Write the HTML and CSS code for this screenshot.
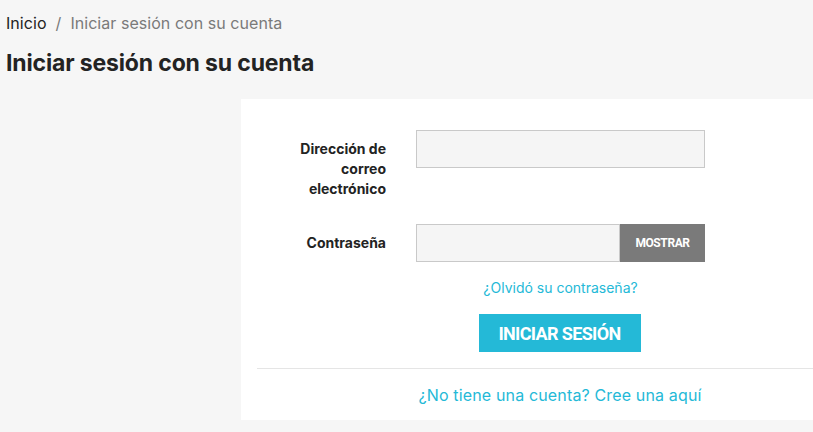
FILE: index.html
```html
<!DOCTYPE html>
<html lang="es">
<head>
<meta charset="utf-8">
<title>Iniciar sesión</title>
<link rel="stylesheet" href="styles.css">
</head>
<body>
<div class="wrap">
  <nav class="crumbs"><a class="crumb-home" href="#">Inicio</a><span class="sep">/</span><span class="crumb-cur">Iniciar sesión con su cuenta</span></nav>
  <h1 class="title">Iniciar sesión con su cuenta</h1>
  <section class="card">
    <form class="form">
      <div class="row row-email">
        <label class="lbl">Dirección de correo electrónico</label>
        <div class="field"><input class="inp" type="email"></div>
      </div>
      <div class="row row-pass">
        <label class="lbl">Contraseña</label>
        <div class="field group"><input class="inp inp-pass" type="password"><button type="button" class="show">MOSTRAR</button></div>
      </div>
      <div class="forgot"><a href="#">¿Olvidó su contraseña?</a></div>
      <div class="submit-row"><button type="button" class="submit">INICIAR SESIÓN</button></div>
    </form>
    <hr class="sepline">
    <div class="noacc"><a href="#">¿No tiene una cuenta? Cree una aquí</a></div>
  </section>
</div>
</body>
</html>
```
FILE: styles.css
```css
html, body { margin: 0; padding: 0; background: #f6f6f6; overflow: hidden; }
body { font-family: Inter, "Noto Sans", sans-serif; color: #232323; width: 813px; height: 432px; }
a { text-decoration: none; color: #24b9d7; }
.wrap { padding: 11px 0 0 6px; }
.crumbs { font-size: 16px; line-height: 24px; height: 24px; white-space: nowrap; letter-spacing: 0.05px; }
.crumb-home { color: #232323; }
.sep { color: #7a7a7a; margin: 0 9px 0 9px; }
.crumb-cur { color: #7a7a7a; }
.title { margin: 13px 0 0 0; font-size: 23px; line-height: 30px; font-weight: 700; letter-spacing: -0.15px; }
.card { margin: 21px 0 0 235px; width: 606px; padding: 0 16px; background: #fff; height: 321px; box-sizing: content-box; }
.form { padding-top: 31px; }
.row { display: flex; gap: 30px; }
.lbl { box-sizing: border-box; width: 129px; padding-left: 19px; text-align: right; font-size: 14px; font-weight: 700; line-height: 20px; padding-top: 9px; color: #232323; }
.field { width: 289px; }
.row-pass { margin-top: 25px; }
.inp { box-sizing: border-box; width: 289px; height: 38px; background: #f5f5f5; border: 1px solid #c9c9c9; margin: 0; padding: 0 10px; display: block; font-size: 14px; }
.group { display: flex; }
.inp-pass { width: 204px; }
.show { width: 85px; height: 38px; border: 0; background: #7a7a7a; color: #fff; font-family: Roboto, sans-serif; font-weight: 700; font-size: 12px; letter-spacing: -0.4px; padding: 0; margin: 0; }
.forgot { margin: 16px 0 0 159px; width: 289px; text-align: center; font-size: 14px; line-height: 20px; letter-spacing: 0px; }
.submit-row { margin: 16px 0 0 159px; width: 289px; display: flex; justify-content: center; }
.submit { width: 162px; height: 38px; border: 0; background: #24b9d7; color: #fff; font-family: Roboto, sans-serif; font-weight: 700; font-size: 18px; letter-spacing: -0.65px; padding: 0; margin: 0 0 0 -2px; }
.sepline { margin: 16px 0 0 0; border: 0; border-top: 1px solid #e5e5e5; height: 0; width: 620px; }
.noacc { margin-top: 15px; text-align: center; font-size: 16px; line-height: 22px; letter-spacing: 0.15px; width: 606px; }
```
